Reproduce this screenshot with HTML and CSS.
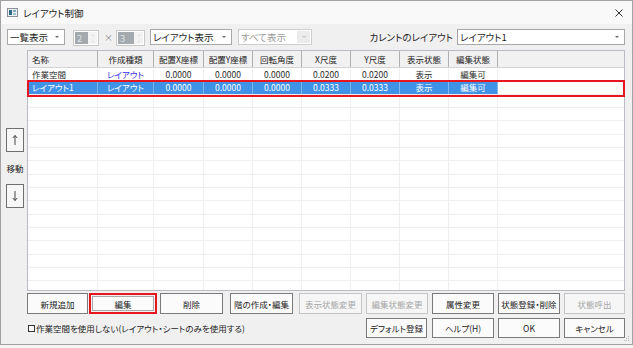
FILE: index.html
```html
<!DOCTYPE html>
<html lang="ja">
<head>
<meta charset="utf-8">
<title>レイアウト制御</title>
<link rel="stylesheet" href="styles.css">
</head>
<body>
<div class="window">
  <div class="titlebar">
    <svg class="app-icon" viewBox="0 0 11 9" width="11" height="9">
      <rect x="0.5" y="0.5" width="10" height="8" fill="#eef2f6" stroke="#8a9096"/>
      <rect x="2" y="2" width="3" height="5" fill="#2d6c86"/>
      <rect x="6" y="2" width="3" height="2" fill="#7fa9c2"/>
      <rect x="6" y="5" width="3" height="2" fill="#9fbfcf"/>
    </svg>
    <span class="title">レイアウト制御</span>
    <svg class="close" viewBox="0 0 8 8" width="8" height="8">
      <path d="M0.5 0.5 L7.5 7.5 M7.5 0.5 L0.5 7.5" stroke="#333" stroke-width="1"/>
    </svg>
  </div>

  <div class="toolbar">
    <div class="combo combo-list"><span>一覧表示</span><i class="arrow"></i></div>
    <div class="spin spin-a"><span class="spin-val">2</span><span class="spin-btns"><i class="up"></i><i class="dn"></i></span></div>
    <span class="times">×</span>
    <div class="spin spin-b"><span class="spin-val">3</span><span class="spin-btns"><i class="up"></i><i class="dn"></i></span></div>
    <div class="combo combo-view"><span>レイアウト表示</span><i class="arrow"></i></div>
    <div class="combo combo-all is-disabled"><span>すべて表示</span><span class="drop-box"><i class="arrow"></i></span></div>
    <span class="cur-label">カレントのレイアウト</span>
    <div class="combo combo-cur"><span>レイアウト1</span><i class="arrow"></i></div>
  </div>

  <div class="main">
    <div class="mover">
      <div class="move-btn">
        <svg viewBox="0 0 8 12" width="8" height="12"><path d="M4 1.5 V11 M1.8 4 L4 1.5 L6.2 4" fill="none" stroke="#333" stroke-width="0.9"/></svg>
      </div>
      <span class="move-label">移動</span>
      <div class="move-btn">
        <svg viewBox="0 0 8 12" width="8" height="12"><path d="M4 1 V10.5 M1.8 8 L4 10.5 L6.2 8" fill="none" stroke="#333" stroke-width="0.9"/></svg>
      </div>
    </div>

    <div class="grid-wrap">
      <div class="grid">
        <div class="row head">
          <div class="cell left">名称</div>
          <div class="cell">作成種類</div>
          <div class="cell">配置X座標</div>
          <div class="cell">配置Y座標</div>
          <div class="cell">回転角度</div>
          <div class="cell">X尺度</div>
          <div class="cell">Y尺度</div>
          <div class="cell">表示状態</div>
          <div class="cell">編集状態</div>
          <div class="cell fill"></div>
        </div>
        <div class="rows">
          <div class="row">
            <div class="cell left">作業空間</div>
            <div class="cell kind">レイアウト</div>
            <div class="cell">0.0000</div>
            <div class="cell">0.0000</div>
            <div class="cell">0.0000</div>
            <div class="cell">0.0200</div>
            <div class="cell">0.0200</div>
            <div class="cell">表示</div>
            <div class="cell">編集可</div>
            <div class="cell fill"></div>
          </div>
          <div class="row selected">
            <div class="cell left">レイアウト1</div>
            <div class="cell">レイアウト</div>
            <div class="cell">0.0000</div>
            <div class="cell">0.0000</div>
            <div class="cell">0.0000</div>
            <div class="cell">0.0333</div>
            <div class="cell">0.0333</div>
            <div class="cell">表示</div>
            <div class="cell">編集可</div>
            <div class="cell fill"></div>
          </div>
          <div class="row"><div class="cell"></div><div class="cell"></div><div class="cell"></div><div class="cell"></div><div class="cell"></div><div class="cell"></div><div class="cell"></div><div class="cell"></div><div class="cell"></div><div class="cell fill"></div></div>
          <div class="row"><div class="cell"></div><div class="cell"></div><div class="cell"></div><div class="cell"></div><div class="cell"></div><div class="cell"></div><div class="cell"></div><div class="cell"></div><div class="cell"></div><div class="cell fill"></div></div>
          <div class="row"><div class="cell"></div><div class="cell"></div><div class="cell"></div><div class="cell"></div><div class="cell"></div><div class="cell"></div><div class="cell"></div><div class="cell"></div><div class="cell"></div><div class="cell fill"></div></div>
          <div class="row"><div class="cell"></div><div class="cell"></div><div class="cell"></div><div class="cell"></div><div class="cell"></div><div class="cell"></div><div class="cell"></div><div class="cell"></div><div class="cell"></div><div class="cell fill"></div></div>
          <div class="row"><div class="cell"></div><div class="cell"></div><div class="cell"></div><div class="cell"></div><div class="cell"></div><div class="cell"></div><div class="cell"></div><div class="cell"></div><div class="cell"></div><div class="cell fill"></div></div>
          <div class="row"><div class="cell"></div><div class="cell"></div><div class="cell"></div><div class="cell"></div><div class="cell"></div><div class="cell"></div><div class="cell"></div><div class="cell"></div><div class="cell"></div><div class="cell fill"></div></div>
          <div class="row"><div class="cell"></div><div class="cell"></div><div class="cell"></div><div class="cell"></div><div class="cell"></div><div class="cell"></div><div class="cell"></div><div class="cell"></div><div class="cell"></div><div class="cell fill"></div></div>
          <div class="row"><div class="cell"></div><div class="cell"></div><div class="cell"></div><div class="cell"></div><div class="cell"></div><div class="cell"></div><div class="cell"></div><div class="cell"></div><div class="cell"></div><div class="cell fill"></div></div>
          <div class="row"><div class="cell"></div><div class="cell"></div><div class="cell"></div><div class="cell"></div><div class="cell"></div><div class="cell"></div><div class="cell"></div><div class="cell"></div><div class="cell"></div><div class="cell fill"></div></div>
          <div class="row"><div class="cell"></div><div class="cell"></div><div class="cell"></div><div class="cell"></div><div class="cell"></div><div class="cell"></div><div class="cell"></div><div class="cell"></div><div class="cell"></div><div class="cell fill"></div></div>
          <div class="row"><div class="cell"></div><div class="cell"></div><div class="cell"></div><div class="cell"></div><div class="cell"></div><div class="cell"></div><div class="cell"></div><div class="cell"></div><div class="cell"></div><div class="cell fill"></div></div>
          <div class="row"><div class="cell"></div><div class="cell"></div><div class="cell"></div><div class="cell"></div><div class="cell"></div><div class="cell"></div><div class="cell"></div><div class="cell"></div><div class="cell"></div><div class="cell fill"></div></div>
          <div class="row"><div class="cell"></div><div class="cell"></div><div class="cell"></div><div class="cell"></div><div class="cell"></div><div class="cell"></div><div class="cell"></div><div class="cell"></div><div class="cell"></div><div class="cell fill"></div></div>
          <div class="row"><div class="cell"></div><div class="cell"></div><div class="cell"></div><div class="cell"></div><div class="cell"></div><div class="cell"></div><div class="cell"></div><div class="cell"></div><div class="cell"></div><div class="cell fill"></div></div>
          <div class="row"><div class="cell"></div><div class="cell"></div><div class="cell"></div><div class="cell"></div><div class="cell"></div><div class="cell"></div><div class="cell"></div><div class="cell"></div><div class="cell"></div><div class="cell fill"></div></div>
        </div>
      </div>
      <div class="sel-mark"></div>
    </div>
  </div>

  <div class="actions">
    <button class="btn w61">新規追加</button>
    <div class="hl"><button class="btn inner">編集</button></div>
    <button class="btn w63">削除</button>
    <button class="btn w63">階の作成・編集</button>
    <button class="btn w63" disabled>表示状態変更</button>
    <button class="btn w62" disabled>編集状態変更</button>
    <button class="btn w62">属性変更</button>
    <button class="btn w62">状態登録・削除</button>
    <button class="btn w61" disabled>状態呼出</button>

    <label class="check"><span class="box"></span>作業空間を使用しない(レイアウト・シートのみを使用する)</label>
    <button class="btn w61 r2 c6">デフォルト登録</button>
    <button class="btn w62 r2">ヘルプ(H)</button>
    <button class="btn w62 r2">OK</button>
    <button class="btn w61 r2">キャンセル</button>
  </div>

  <svg class="grip" viewBox="0 0 6 6" width="6" height="6">
    <rect x="4" y="0" width="1" height="1" fill="#b5b5b5"/>
    <rect x="2" y="2" width="1" height="1" fill="#b5b5b5"/>
    <rect x="4" y="2" width="1" height="1" fill="#b5b5b5"/>
    <rect x="0" y="4" width="1" height="1" fill="#b5b5b5"/>
    <rect x="2" y="4" width="1" height="1" fill="#b5b5b5"/>
    <rect x="4" y="4" width="1" height="1" fill="#b5b5b5"/>
  </svg>
</div>
</body>
</html>
```

FILE: styles.css
```css
html, body {
  margin: 0;
  padding: 0;
  background: #f4f4f4;
}

body {
  font-family: "Noto Sans CJK JP", "Noto Sans", sans-serif;
  font-feature-settings: "palt";
  color: #1e1e1e;
}

.window {
  position: relative;
  width: 633px;
  height: 345px;
  box-sizing: border-box;
  border: 1px solid #a2a2a2;
  background: #f0f0f0;
  display: flex;
  flex-direction: column;
}

/* title bar */
.titlebar {
  flex: none;
  height: 23px;
  background: #f9f9f9;
  display: flex;
  align-items: center;
  padding: 0 9px 0 6px;
}
.app-icon { margin-right: 5px; }
.title { font-size: 9.5px; color: #222; }
.close { margin-left: auto; }

/* toolbar */
.toolbar {
  flex: none;
  display: flex;
  align-items: center;
  height: 16px;
  margin-top: 5px;
  padding: 0 7px 0 6px;
  font-size: 9.5px;
}
.combo {
  height: 16px;
  box-sizing: border-box;
  border: 1px solid #a8a8a8;
  background: #fff;
  display: flex;
  align-items: center;
  padding-left: 2px;
  line-height: 14px;
  white-space: nowrap;
}
.combo .arrow {
  margin-left: auto;
  margin-right: 5px;
  width: 0;
  height: 0;
  border-left: 2px solid transparent;
  border-right: 2px solid transparent;
  border-top: 2px solid #6a6a6a;
}
.combo-list { width: 58px; }
.combo-view { width: 82px; margin-left: 85px; }
.combo-all { width: 74px; margin-left: 6px; }
.combo-cur { width: 168px; margin-left: 4px; }
.combo.is-disabled { border-color: #cdcdcd; color: #9c9c9c; padding-right: 1px; }
.drop-box {
  margin-left: auto;
  width: 13px;
  height: 12px;
  background: #ebebeb;
  display: flex;
  align-items: center;
  justify-content: center;
}
.drop-box .arrow { margin: 0; border-top-color: #c6c6c6; }

.spin {
  position: absolute;
  top: 29px;
  height: 16px;
  box-sizing: border-box;
  border: 1px solid #c9c9c9;
  background: #fff;
  display: flex;
  padding: 1px;
}
.spin-a { left: 72px; width: 26px; }
.spin-b { left: 115px; width: 29px; }
.spin-val {
  flex: 1;
  background: #a4a9ae;
  color: #dfe2e5;
  font-size: 9.5px;
  line-height: 12px;
  padding-left: 2px;
}
.spin-btns {
  width: 9px;
  background: #f3f3f3;
  display: flex;
  flex-direction: column;
  align-items: center;
  justify-content: space-around;
}
.spin-btns i {
  width: 0;
  height: 0;
  border-left: 1.5px solid transparent;
  border-right: 1.5px solid transparent;
}
.spin-btns .up { border-bottom: 1.5px solid #bdbdbd; }
.spin-btns .dn { border-top: 1.5px solid #bdbdbd; }
.times {
  position: absolute;
  left: 103px;
  top: 30px;
  font-size: 9px;
  line-height: 14px;
  color: #8a8a8a;
}
.cur-label { margin-left: auto; margin-right: 0; color: #222; }

/* main area */
.main {
  flex: none;
  display: flex;
  height: 241px;
  margin-top: 5px;
}
.mover {
  width: 26px;
  display: flex;
  flex-direction: column;
  align-items: flex-start;
  justify-content: center;
  padding: 0 0 5px 5px;
  box-sizing: border-box;
}
.move-btn {
  width: 18px;
  height: 24px;
  box-sizing: border-box;
  border: 1px solid #6f6f6f;
  background: #f7f7f7;
  display: flex;
  align-items: center;
  justify-content: center;
}
.move-label {
  width: 18px;
  text-align: center;
  font-size: 8.5px;
  line-height: 32px;
  color: #222;
}

.grid-wrap { position: relative; }
.grid {
  width: 598px;
  height: 241px;
  box-sizing: border-box;
  border: 1px solid #b9bac4;
  background: #fff;
  overflow: hidden;
  font-size: 8.5px;
}
.row {
  display: grid;
  grid-template-columns: 70px 56px 50px 49px 49px 49px 49px 49px 49px 1fr;
  box-sizing: border-box;
  border-bottom: 1px solid #eeeeee;
}
.cell {
  border-right: 1px solid #eeeeee;
  text-align: center;
  white-space: nowrap;
  overflow: hidden;
  color: #2a2a2a;
}
.cell.left { text-align: left; padding-left: 4px; }
.cell.fill { border-right: none; }

.row.head {
  height: 17px;
  background: #f1f1f1;
  border-bottom: 1px solid #d4d4d4;
}
.row.head .cell {
  border-right: 1px solid #b0b0b0;
  line-height: 16px;
  color: #222;
}
.row.head .cell.fill { border-right: none; }

.rows {
  display: grid;
  grid-auto-rows: 13.333px;
}
.rows .cell { line-height: 12px; }
.cell.kind { color: #3a32f0; }

.row.selected .cell {
  background: #3f92e6;
  color: #fff;
  border-right-color: #7fb6ee;
}
.row.selected .cell.fill { background: #fff; }

.sel-mark {
  position: absolute;
  left: 0;
  top: 30px;
  width: 598px;
  height: 17px;
  box-sizing: border-box;
  border: 2px solid #e8161e;
}

/* actions */
.actions {
  flex: none;
  display: grid;
  grid-template-columns: 62px 71px 70px 69px 67px 66px 66px 66px 61px;
  grid-template-rows: 21px 20px;
  row-gap: 4px;
  margin: 2px 0 0 26px;
}
.btn {
  font-family: inherit;
  font-feature-settings: "palt";
  font-size: 8.5px;
  color: #222;
  background: #fbfbfb;
  border: 1px solid #7a7a7a;
  border-radius: 0;
  padding: 0;
  margin: 0;
  height: 100%;
  white-space: nowrap;
}
.btn:disabled {
  color: #a6a6a6;
  border-color: #c4c4c4;
  background: #f6f6f6;
}
.w61 { width: 61px; }
.w62 { width: 62px; }
.w63 { width: 63px; }
.hl {
  width: 68px;
  box-sizing: border-box;
  border: 2px solid #e8161e;
  padding: 1px;
  display: flex;
}
.btn.inner {
  width: 100%;
  height: 100%;
  border-color: #a9a9a9;
}
.check {
  grid-column: 1 / 6;
  display: flex;
  align-items: center;
  font-size: 8.5px;
  color: #222;
  padding-left: 1px;
  white-space: nowrap;
}
.check .box {
  width: 7px;
  height: 7px;
  box-sizing: border-box;
  border: 1px solid #333;
  background: #fff;
  margin-right: 1px;
}
.c6 { grid-column: 6; }

.grip {
  position: absolute;
  right: 2px;
  bottom: 2px;
}
```
